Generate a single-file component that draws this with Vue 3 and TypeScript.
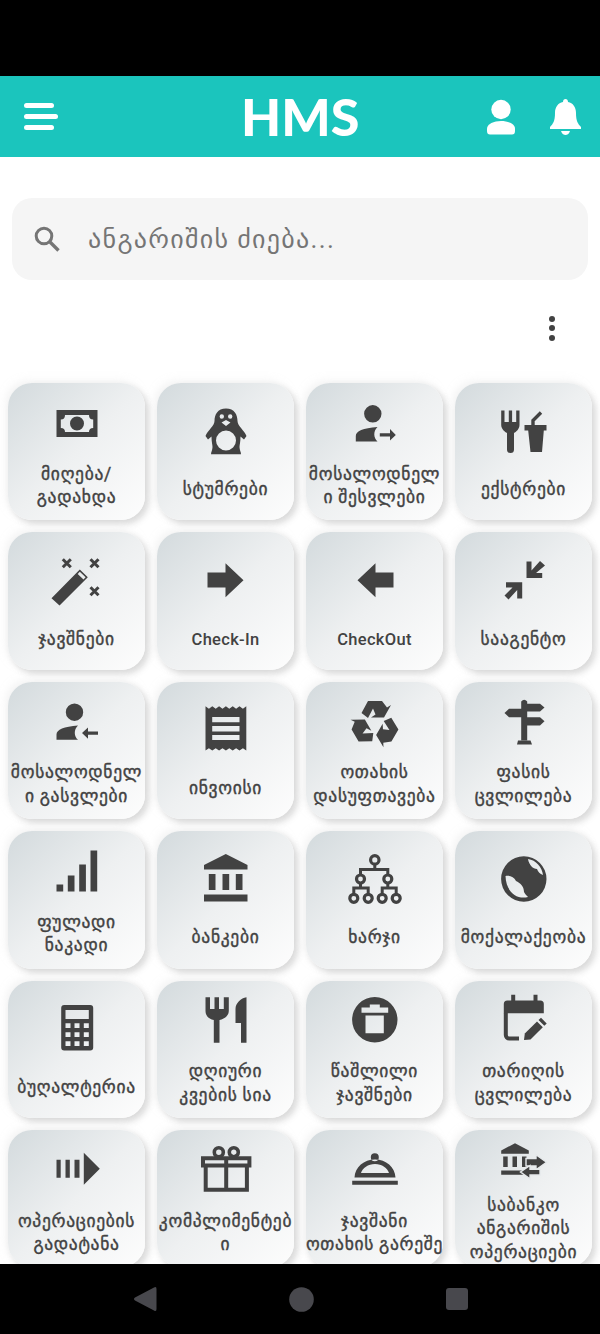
<script setup lang="ts">
interface Shape { d: string; sw?: number; t?: string; halo?: boolean }
interface Item { label: string; icon: Shape[] }

const disc = (x: number, y: number, r: number): string =>
  `M${x - r} ${y}a${r} ${r} 0 1 0 ${2 * r} 0a${r} ${r} 0 1 0 ${-2 * r} 0Z`;
const box = (x: number, y: number, w: number, h: number): string => `M${x} ${y}h${w}v${h}h${-w}Z`;
const isLatin = (s: string): boolean => /^[A-Za-z-]+$/.test(s);

const recycleArm = 'M15.5 20L22 8H36L41 14.5L45 12L38 24.5H25L29.5 21.5L27 15.5L22 25Z';
const zigzag = (): string => {
  let top = 'M8.5 6.3';
  for (let i = 0; i < 6; i++) top += 'l3.4 2.4l3.4-2.4';
  let bottom = 'V50.6';
  for (let i = 0; i < 6; i++) bottom += 'l-3.4-2.4l-3.4 2.4';
  return top + bottom + 'Z' + box(15.2, 17, 27.3, 5.2) + box(15.2, 26, 27.3, 5.4) + box(15.2, 35, 27.3, 5);
};

const items: Item[] = [
  { label: 'მიღება/\nგადახდა', icon: [{ d: 'M8.5 16H49.5V43H8.5Z M17 21H41Q41 25.5 45.2 25.5V34Q41 34 41 38H17Q17 34 12.8 34V25.5Q17 25.5 17 21Z' }, { d: disc(29, 29.5, 7) }] },
  { label: 'სტუმრები', icon: [{ d: 'M29 6.6C20.5 6.6 17.5 13 17.5 19C17.5 24 10.5 28.5 8.5 34L11 37.5L14.5 34.5C14.5 40 15.5 43 15.5 45C15.5 48 14 50 14 52.3H44C44 50 42.5 48 42.5 45C42.5 43 43.5 40 43.5 34.5L47 37.5L49.5 34C47.5 28.5 40.5 24 40.5 19C40.5 13 37.5 6.6 29 6.6Z' + disc(29, 38.5, 10) + disc(24.8, 14.5, 2.2) + disc(33.2, 14.5, 2.2) + 'M24.5 20.5L29 18L33.5 20.5L29 24Z' }] },
  { label: 'მოსალოდნელ\nი შესვლები', icon: [{ d: disc(26.8, 19.8, 8.7) }, { d: 'M9.8 47.5V42C9.8 37 17 34 31.5 33C27 37 27.5 44 31.5 47.5Z' }, { d: 'M33.8 39.3H44V35L49.8 41L44 46.5V42.4H33.8Z' }] },
  { label: 'ექსტრები', icon: [{ d: 'M6.2 8.6H9.5V20H13.8V8.6H17.1V20H21.2V8.6H24.5V23C24.5 27 21 30 19 31V47.5A3.5 3.5 0 0 1 12 47.5V31C10 30 6.2 27 6.2 23Z' }, { d: 'M29.5 23H51.5V28.6H48.8L47 50H35.5L33.2 28.6H29.5Z' }, { d: 'M38 24V18.5L46 10.5', sw: 3.4 }] },
  { label: 'ჯავშნები', icon: [{ d: 'M3.5 47.3L31.8 18.6L39.8 26.3L11.5 54.6Z M31.8 20.8L37.6 26.3L35.5 28.4L29.7 22.9Z' }, { d: 'M14.8 8.3L22.8 16.3M22.8 8.3L14.8 16.3M42.5 8.3L50.5 16.3M50.5 8.3L42.5 16.3M42.5 36.3L50.5 44.3M50.5 36.3L42.5 44.3', sw: 3 }] },
  { label: 'Check-In', icon: [{ d: 'M10.5 21.5H28.5V12.3L46.5 29.3L28.5 46.3V36.5H10.5Z' }] },
  { label: 'CheckOut', icon: [{ d: 'M47.5 21.5H29.5V12.3L11.5 29.3L29.5 46.3V36.5H47.5Z' }] },
  { label: 'სააგენტო', icon: [{ d: 'M31.5 10.6H36.5V19.5L45 10L50 14.5L41 22H47.2V27H31.5Z' }, { d: 'M27.2 47.5H22.2V39L13.5 48.6L9.5 44.5L17.5 36.5H11V31.3H27.2Z' }] },
  { label: 'მოსალოდნელ\nი გასვლები', icon: [{ d: disc(26.5, 19.2, 8.7) }, { d: 'M8.5 46.8V41.5C8.5 36.5 16 33.5 30 32.5C25.5 36.5 26 43.5 30 46.8Z' }, { d: 'M50 38.6H40V34.5L34 40L40 45.8V41.7H50Z' }] },
  { label: 'ინვოისი', icon: [{ d: zigzag() }] },
  { label: 'ოთახის\nდასუფთავება', icon: [{ d: recycleArm }, { d: recycleArm, t: 'rotate(120 29 31)' }, { d: recycleArm, t: 'rotate(240 29 31)' }] },
  { label: 'ფასის\nცვლილება', icon: [{ d: 'M26.2 8.5Q29.2 5 32.2 8.5V47.5H26.2Z' }, { d: 'M23 47.5H35.5L37 51.5H22Z' }, { d: 'M30 10.8H45L49.5 14.6L45 18.5H30Z' }, { d: 'M28 15.8H14L9.5 20L14 24.2H28Z' }, { d: 'M30 24.2H45L49.5 28.3L45 32.5H30Z' }] },
  { label: 'ფულადი\nნაკადი', icon: [{ d: box(8.5, 42.5, 6.7, 7) + box(19.8, 33.5, 6.7, 16) + box(31.2, 22.5, 6.7, 27) + box(42.5, 8.5, 6.7, 41) }] },
  { label: 'ბანკები', icon: [{ d: 'M7 19.6V15L28.8 4L50.5 15V19.6Z' + box(11.8, 23.9, 6.7, 16) + box(25.5, 23.9, 6.7, 16) + box(38.8, 23.9, 6.7, 16) + box(7, 44.6, 43.5, 7) }] },
  { label: 'ხარჯი', icon: [{ d: 'M28.8 14V19.5M14.5 25V19.5H41.8V25M14.5 33V38M7.8 44V38H22.2V44M41.8 33V38M36.2 44V38H50.2V44', sw: 3 }, { d: disc(28.8, 9.9, 4.2) + disc(14.5, 29, 4) + disc(41.8, 29, 4) + disc(7.8, 48.3, 4) + disc(22.2, 48.3, 4) + disc(36.2, 48.3, 4) + disc(50.2, 48.3, 4), sw: 3.2 }] },
  { label: 'მოქალაქეობა', icon: [{ d: disc(28.8, 29, 22.7) + 'M10.5 26C15 25 19 27 21 31C25 33 29 36 29 42C30 44 32 46 33 47C22 50 11 42 10.5 26Z M33 9C41 10 47 17 48 25C45 24 43 22 42 19C38 19 34 15 33 9Z' }] },
  { label: 'ბუღალტერია', icon: [{ d: 'M16.2 6H42.2A3 3 0 0 1 45.2 9V48.6A3 3 0 0 1 42.2 51.6H16.2A3 3 0 0 1 13.2 48.6V9A3 3 0 0 1 16.2 6Z' + box(17.5, 10.9, 23.3, 9.1) + [24.3, 33.3, 42.3].map((y) => box(17.5, y, 5, 4.8) + box(26.5, y, 5, 4.8) + box(35.8, y, 5, 4.8)).join('') }] },
  { label: 'დღიური\nკვების სია', icon: [{ d: 'M8.5 6.2H13V18H17.5V6.2H22V18H26.8V6.2H31.8V20C31.8 25 27 28 22.5 29V51.8H16.8V29C12 28 8.5 25 8.5 20Z' }, { d: 'M49.5 6.2V51.8H44V32H38.5V18C38.5 12 44 7 49.5 6.2Z' }] },
  { label: 'წაშლილი\nჯავშნები', icon: [{ d: disc(28.8, 28.8, 22.7) + 'M15.5 16.5H23.8V13.5H33.8V16.5H42.2V21.8H15.5Z' + box(19.5, 24.5, 18.3, 17.7) }] },
  { label: 'თარიღის\nცვლილება', icon: [{ d: 'M8.8 22.2V13A3.5 3.5 0 0 1 12.3 9.5H16.2V3.8H20.2V9.5H38.5V3.8H42.5V9.5H45.3A3.5 3.5 0 0 1 48.8 13V22.2Z' }, { d: 'M10.8 22V44A3.5 3.5 0 0 0 14.3 47.5H24', sw: 4 }, { d: 'M29 49L29.8 42.5L42 30.5L47.8 36.3L35.5 48.5Z' }, { d: 'M43.5 29L46 26.7L51.7 32.4L49.3 34.8Z' }] },
  { label: 'ოპერაციების\nგადატანა', icon: [{ d: box(8.5, 18.8, 4.2, 18) + box(17.5, 18.8, 4.3, 18) + box(26.5, 18.8, 5, 18) + 'M35.8 11.8L51.8 27.8L35.8 43.8Z' }] },
  { label: 'კომპლიმენტებ\nი', icon: [{ d: 'M6 17.3H52.4V24.4H6Z M8.7 25V48.7H49.9V25 M29.2 17V49', sw: 4 }, { d: disc(21.8, 11.2, 4.5) + disc(36.8, 11.2, 4.5), sw: 3.6 }] },
  { label: 'ჯავშანი\nოთახის გარეშე', icon: [{ d: box(6.2, 39.8, 45.6, 4) + disc(28.8, 16.2, 4) + 'M8.5 36.5C9 26 18 18.5 29 18.5C40 18.5 49 26 49.5 36.5Z M15 32C16.5 27 22 23 29 23C36 23 41.5 27 43 32Z' }] },
  { label: 'საბანკო\nანგარიშის\nოპერაციები', icon: [{ d: 'M6.2 20.8V17.5L20 10.2L33.8 17.5V20.8Z' + box(8.2, 23.5, 4.5, 10.5) + box(17.5, 23.5, 4.5, 10.5) + box(27, 23.5, 4.5, 10.5) + box(6.2, 37.5, 26, 4.3) }, { d: 'M31 25.5H41V21.8L51.5 29.2L41 36.8V33H31Z', halo: true }, { d: 'M45 36.3H35V32.5L25.5 39L35 45.8V42H45Z', halo: true }] },
];
</script>

<template>
  <div class="screen">
    <div class="status"></div>
    <header class="bar">
      <div class="burger"><i class="short"></i><i></i><i class="short"></i></div>
      <div class="logo">HMS</div>
      <div class="actions">
        <svg width="28" height="36" viewBox="0 0 28 36"><circle cx="14" cy="10.5" r="9.7" /><path d="M0 32V29.5C0 25 7 22 14 22C21 22 28 25 28 29.5V32Q28 35.5 25 35.5H3Q0 35.5 0 32Z" /></svg>
        <svg width="31" height="36" viewBox="0 0 31 36"><path d="M15.5 0C17 0 18 1 18 3C23 4 26 8 26 14C26 22 28 25 31 28V30H0V28C3 25 5 22 5 14C5 8 8 4 13 3C13 1 14 0 15.5 0Z" /><path d="M11 32H20C19 35 17 36 15.5 36C14 36 12 35 11 32Z" /></svg>
      </div>
    </header>

    <main class="content">
      <div class="search">
        <svg width="26" height="26" viewBox="0 0 26 26" fill="none" stroke="#757575"><circle cx="10" cy="10" r="7.8" stroke-width="3" /><path d="M15.5 15.5L24.5 24.5" stroke-width="3.4" /></svg>
        <span>ანგარიშის ძიება...</span>
      </div>
      <div class="more"><div class="dots"><i></i><i></i><i></i></div></div>
      <section class="grid">
        <article v-for="item in items" :key="item.label" class="card">
          <div class="icon">
            <svg width="58" height="58" viewBox="0 0 58 58">
              <path
                v-for="(s, n) in item.icon"
                :key="n"
                :d="s.d"
                :transform="s.t"
                :fill="s.sw ? 'none' : '#424242'"
                :stroke="s.sw ? '#424242' : s.halo ? '#e6e9eb' : 'none'"
                :stroke-width="s.sw ?? (s.halo ? 1.4 : 0)"
                fill-rule="evenodd"
              />
            </svg>
          </div>
          <div class="label" :class="{ latin: isLatin(item.label) }">{{ item.label }}</div>
        </article>
      </section>
    </main>

    <nav class="nav">
      <svg width="24" height="26" viewBox="0 0 24 26"><path d="M21 1.5Q23.5 0 23.5 3V23Q23.5 26 21 24.5L2 14.5Q0 13 2 11.5Z" /></svg>
      <svg width="25" height="25" viewBox="0 0 25 25"><circle cx="12.5" cy="12.5" r="12.3" /></svg>
      <svg width="22" height="22" viewBox="0 0 22 22"><rect width="22" height="22" rx="3" /></svg>
    </nav>
  </div>
</template>

<style scoped>
.screen {
  width: 600px;
  height: 1334px;
  display: flex;
  flex-direction: column;
  overflow: hidden;
  background: #fff;
  font-family: Roboto, "DejaVu Sans", sans-serif;
}
.status {
  height: 76px;
  flex: none;
  background: #000;
}
.bar {
  height: 81px;
  flex: none;
  background: #1bc5bd;
  display: flex;
  align-items: center;
  justify-content: space-between;
  padding: 0 19.5px 0 24px;
  position: relative;
}
.burger {
  width: 34px;
  display: flex;
  flex-direction: column;
  gap: 5.5px;
}
.burger i {
  display: block;
  height: 5.5px;
  border-radius: 3px;
  background: #fff;
}
.burger .short {
  width: 30px;
}
.logo {
  position: absolute;
  left: 241px;
  top: 11px;
  font: 900 52px/58px Lato, sans-serif;
  color: #fff;
}
.actions {
  display: flex;
  align-items: center;
  gap: 35px;
}
.actions svg {
  fill: #fff;
  display: block;
}
.content {
  flex: 1;
  min-height: 0;
  overflow: hidden;
}
.search {
  margin: 41px 12px 0;
  height: 82px;
  border-radius: 20px;
  background: #f5f5f5;
  display: flex;
  align-items: center;
  gap: 28px;
  padding-left: 22px;
  color: #757575;
  font-size: 26px;
  letter-spacing: 1.3px;
}
.more {
  height: 67px;
  display: flex;
  justify-content: flex-end;
  padding: 36px 45px 0 0;
}
.dots {
  display: flex;
  flex-direction: column;
  gap: 3.4px;
  height: 25px;
}
.dots i {
  display: block;
  width: 6px;
  height: 6px;
  border-radius: 50%;
  background: #424242;
}
.grid {
  display: grid;
  grid-template-columns: repeat(4, 137px);
  gap: 12px;
  padding: 0 8px;
}
.card {
  height: 137.4px;
  border-radius: 24px;
  background: linear-gradient(135deg, #d3dadd 0%, #eef0f1 50%, #fdfdfd 100%);
  box-shadow: 4px 4px 6px rgba(90, 90, 90, 0.22), -3px -3px 7px rgba(235, 235, 235, 0.5);
  display: flex;
  flex-direction: column;
  align-items: center;
  justify-content: space-evenly;
  color: #424242;
}
.icon {
  height: 58px;
}
.icon svg {
  display: block;
}
.label {
  font-size: 17.5px;
  line-height: 23.5px;
  letter-spacing: 0.7px;
  text-align: center;
  white-space: pre;
  -webkit-text-stroke: 0.4px #424242;
}
.label.latin {
  font-size: 16.5px;
  font-weight: 500;
  letter-spacing: 0.3px;
  -webkit-text-stroke: 0;
}
.nav {
  height: 70px;
  flex: none;
  background: #000;
  display: flex;
  align-items: center;
  justify-content: center;
  gap: 132px;
}
.nav svg {
  fill: #48484d;
  display: block;
}
</style>

<style>
html,
body {
  margin: 0;
  background: #fff;
}
</style>
